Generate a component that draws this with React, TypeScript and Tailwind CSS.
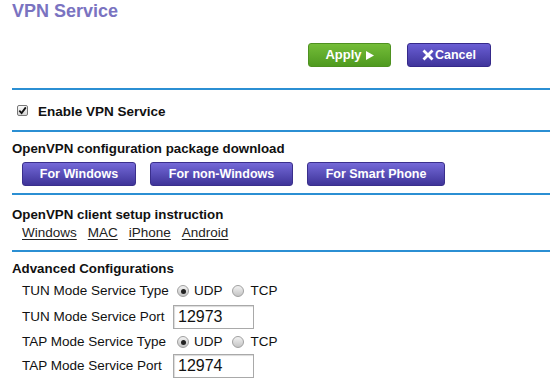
import React from 'react'

const FONT = { fontFamily: '"Liberation Sans", Arial, sans-serif' }

function Radio({ checked }: { checked?: boolean }) {
  return (
    <span className="inline-flex h-[12px] w-[12px] items-center justify-center rounded-full border border-[#a0a0a0] bg-gradient-to-b from-[#f2f2f2] to-[#c4c4c4]">
      {checked && <span className="h-[5px] w-[5px] rounded-full bg-[#222]" />}
    </span>
  )
}

function Divider() {
  return <div className="h-[2px] bg-[#2b8fd3]" />
}

function PurpleButton({ label, width }: { label: string; width: string }) {
  return (
    <div
      className={`${width} flex h-[24px] items-center justify-center rounded-[3px] border border-[#3a2f8c] bg-gradient-to-b from-[#7569d8] to-[#3f3499] text-[12.5px] font-bold text-white`}
    >
      {label}
    </div>
  )
}

function TypeRadios() {
  return (
    <>
      <Radio checked />
      <span className="ml-[5px]">UDP</span>
      <span className="ml-[9px] flex"><Radio /></span>
      <span className="ml-[7px]">TCP</span>
    </>
  )
}

const LINKS = ['Windows', 'MAC', 'iPhone', 'Android']

export default function App() {
  return (
    <div className="h-[382px] w-[550px] overflow-hidden bg-white pl-[12px] text-[#111]" style={FONT}>
      {/* Title */}
      <div className="h-[24px] text-[18px] font-bold leading-[22px] text-[#7a73c1]">VPN Service</div>

      {/* Apply / Cancel */}
      <div className="mt-[19px] flex h-[24px] gap-[16px] pl-[296px]">
        <div className="flex w-[83px] items-center justify-center gap-[4px] rounded-[3px] border border-[#4e9120] bg-gradient-to-b from-[#74bd38] to-[#4f9a1f] text-[13px] font-bold text-white">
          Apply
          <svg width="8" height="9" viewBox="0 0 8 9">
            <path d="M0 0 L8 4.5 L0 9 Z" fill="#fff" />
          </svg>
        </div>
        <div className="flex w-[84px] items-center justify-center gap-[1px] rounded-[3px] border border-[#35298a] bg-gradient-to-b from-[#6a5ed4] to-[#40359c] text-[12.5px] font-bold text-white">
          <svg width="12" height="12" viewBox="0 0 12 12">
            <path d="M1.5 1.5 L10.5 10.5 M10.5 1.5 L1.5 10.5" stroke="#fff" strokeWidth="2.8" />
          </svg>
          Cancel
        </div>
      </div>

      <div className="mt-[21px]">
        <Divider />
      </div>

      {/* Enable */}
      <div className="flex h-[40px] items-center gap-[10px] pl-[5px]">
        <span className="flex h-[11px] w-[11px] items-center justify-center rounded-[2px] border border-[#777] bg-gradient-to-b from-[#fafafa] to-[#d6d6d6]">
          <svg width="9" height="9" viewBox="0 0 9 9">
            <path d="M1.3 4.6 L3.6 7 L7.8 1.4" stroke="#111" strokeWidth="1.8" fill="none" />
          </svg>
        </span>
        <span className="pt-[5px] text-[13.5px] font-bold">Enable VPN Service</span>
      </div>

      <Divider />

      {/* Package download */}
      <div className="mt-[9px] text-[13.3px] font-bold leading-[16px]">OpenVPN configuration package download</div>
      <div className="mt-[5px] flex gap-[14px] pl-[10px]">
        <PurpleButton label="For Windows" width="w-[114px]" />
        <PurpleButton label="For non-Windows" width="w-[143px]" />
        <PurpleButton label="For Smart Phone" width="w-[138px]" />
      </div>

      <div className="mt-[7px]">
        <Divider />
      </div>

      {/* Client setup */}
      <div className="mt-[12px] text-[13.3px] font-bold leading-[16px]">OpenVPN client setup instruction</div>
      <div className="mt-[2px] flex gap-[11px] pl-[10px] text-[13.5px] leading-[16px] text-[#222]">
        {LINKS.map(l => (
          <span key={l} className="underline underline-offset-2">
            {l}
          </span>
        ))}
      </div>

      <div className="mt-[9px]">
        <Divider />
      </div>

      {/* Advanced */}
      <div className="mt-[9px] text-[13.3px] font-bold leading-[16px]">Advanced Configurations</div>
      <div className="mt-[5px] grid grid-cols-[151px_auto] pl-[10px] text-[13.5px] text-[#111]">
        <div className="flex h-[18px] items-center">TUN Mode Service Type</div>
        <div className="flex h-[18px] items-center pl-[4px]">
          <TypeRadios />
        </div>
        <div className="mt-[5px] flex h-[24px] items-center">TUN Mode Service Port</div>
        <div className="mt-[5px] flex h-[24px] w-[81px] items-center border border-[#a9a9a9] pl-[4px] text-[16px] shadow-[inset_1px_1px_1px_rgba(0,0,0,0.15)]">
          12973
        </div>
        <div className="mt-[4px] flex h-[18px] items-center">TAP Mode Service Type</div>
        <div className="mt-[4px] flex h-[18px] items-center pl-[4px]">
          <TypeRadios />
        </div>
        <div className="mt-[3px] flex h-[24px] items-center">TAP Mode Service Port</div>
        <div className="mt-[3px] flex h-[24px] w-[81px] items-center border border-[#a9a9a9] pl-[4px] text-[16px] shadow-[inset_1px_1px_1px_rgba(0,0,0,0.15)]">
          12974
        </div>
      </div>
    </div>
  )
}
